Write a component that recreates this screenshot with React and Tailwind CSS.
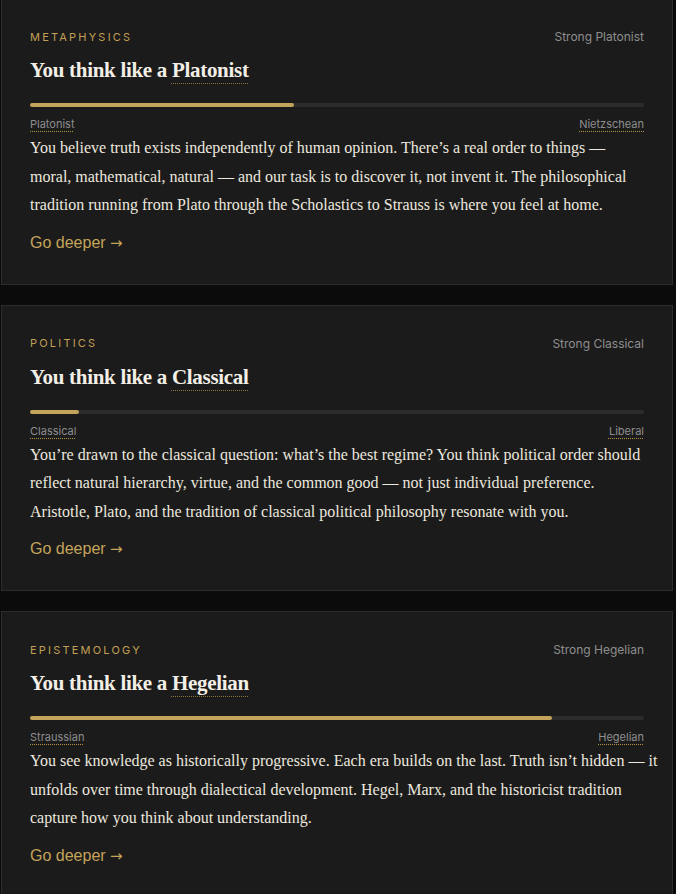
import React from "react";

const cards = [
  {
    cat: "METAPHYSICS",
    strength: "Strong Platonist",
    type: "Platonist",
    pct: 43,
    left: "Platonist",
    right: "Nietzschean",
    lines: [
      "You believe truth exists independently of human opinion. There\u2019s a real order to things \u2014",
      "moral, mathematical, natural \u2014 and our task is to discover it, not invent it. The philosophical",
      "tradition running from Plato through the Scholastics to Strauss is where you feel at home.",
    ],
  },
  {
    cat: "POLITICS",
    strength: "Strong Classical",
    type: "Classical",
    pct: 8,
    left: "Classical",
    right: "Liberal",
    lines: [
      "You\u2019re drawn to the classical question: what\u2019s the best regime? You think political order should",
      "reflect natural hierarchy, virtue, and the common good \u2014 not just individual preference.",
      "Aristotle, Plato, and the tradition of classical political philosophy resonate with you.",
    ],
  },
  {
    cat: "EPISTEMOLOGY",
    strength: "Strong Hegelian",
    type: "Hegelian",
    pct: 85,
    left: "Straussian",
    right: "Hegelian",
    lines: [
      "You see knowledge as historically progressive. Each era builds on the last. Truth isn\u2019t hidden \u2014 it",
      "unfolds over time through dialectical development. Hegel, Marx, and the historicist tradition",
      "capture how you think about understanding.",
    ],
  },
];

const sans = { fontFamily: "Inter, 'Liberation Sans', sans-serif" };
const arial = { fontFamily: "'Liberation Sans', Arial, sans-serif" };
const serif = { fontFamily: "'Liberation Serif', 'DejaVu Serif', serif" };
const arrowFont = { fontFamily: "'DejaVu Sans', sans-serif" };

function Card({ c }) {
  return (
    <div className="border border-[#2c2c2c] bg-[#1b1b1b] px-7 pt-[30px] pb-[27px]">
      <div className="flex items-center justify-between h-4" style={sans}>
        <span className="text-[11px] tracking-[0.2em] text-[#c29f55]">{c.cat}</span>
        <span className="text-[12px] text-[#8e8e8e]">{c.strength}</span>
      </div>
      <h2
        className="mt-[9px] h-8 text-[21px] font-bold tracking-[-0.3px] leading-8 text-[#f3efe6]"
        style={serif}
      >
        You think like a{" "}
        <span className="underline decoration-dotted decoration-[#8a7540] decoration-1 underline-offset-[6px]">
          {c.type}
        </span>
      </h2>
      <div className="mt-[17px] h-1 w-full rounded-full bg-[#2c2c2c]">
        <div
          className="h-1 rounded-full bg-[#c4a35a]"
          style={{ width: `${c.pct}%` }}
        />
      </div>
      <div className="mt-[9px] flex justify-between h-4" style={sans}>
        <span className="text-[11px] leading-4 text-[#8e8e8e] underline decoration-dotted decoration-[#b09040] underline-offset-[3px]">
          {c.left}
        </span>
        <span className="text-[11px] leading-4 text-[#8e8e8e] underline decoration-dotted decoration-[#b09040] underline-offset-[3px]">
          {c.right}
        </span>
      </div>
      <p
        className="mt-[2px] text-[16px] leading-[28.5px] text-[#ece8df] whitespace-nowrap"
        style={serif}
      >
        {c.lines.map((l, i) => (
          <React.Fragment key={i}>
            {l}
            {i < c.lines.length - 1 && <br />}
          </React.Fragment>
        ))}
      </p>
      <div className="mt-[9px] h-7 leading-7 text-[16px] text-[#c4a35a]" style={arial}>
        Go deeper <span className="text-[15px]" style={arrowFont}>→</span>
      </div>
    </div>
  );
}

export default function App() {
  return (
    <div className="min-h-[894px] bg-[#0b0b0b] overflow-hidden">
      <div className="ml-px w-[672px] mt-[-2px] flex flex-col gap-5">
        {cards.map((c) => (
          <Card key={c.cat} c={c} />
        ))}
      </div>
    </div>
  );
}
